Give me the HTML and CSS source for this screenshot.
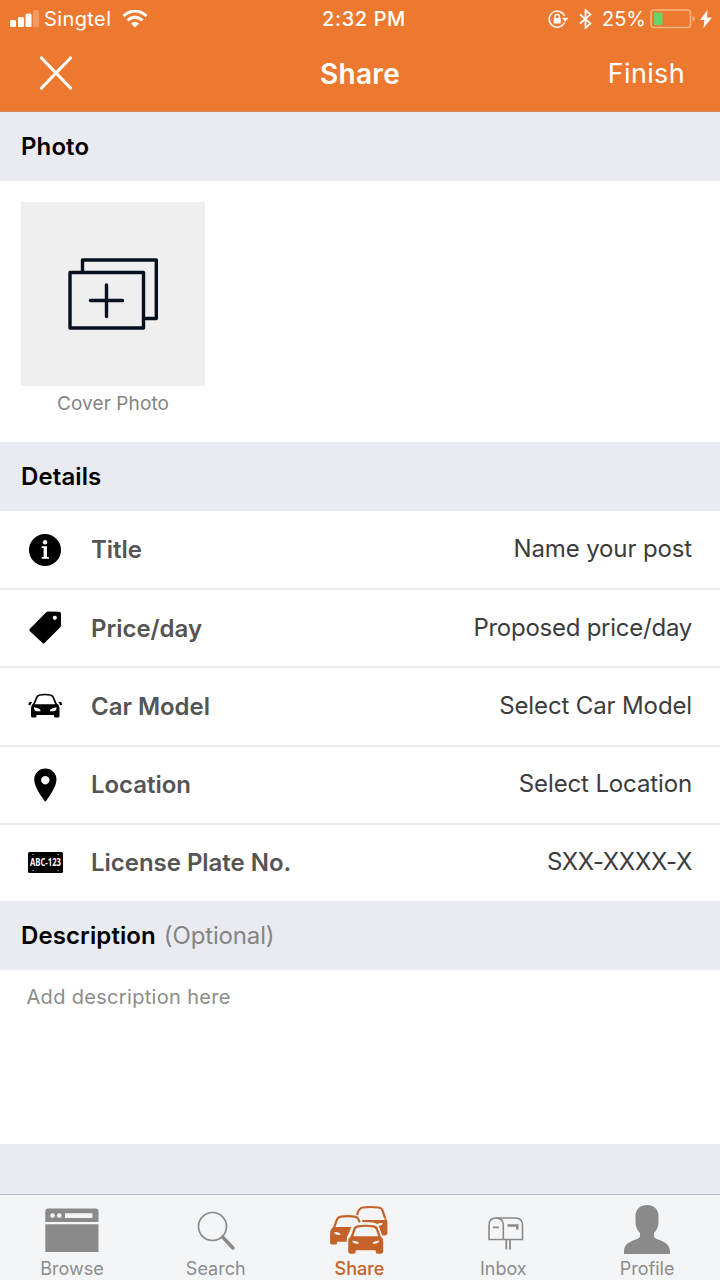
FILE: index.html
```
<!DOCTYPE html>
<html lang="en">
<head>
<meta charset="utf-8">
<title>Share</title>
<link rel="stylesheet" href="styles.css">
</head>
<body>
<div class="app">
  <header class="top">
    <div class="status">
      <div class="status-left">
        <svg class="signal" width="29" height="18" viewBox="0 0 29 18" fill="#fff"><rect x="0" y="10" width="6" height="7" rx="1.5"/><rect x="8" y="7" width="6" height="10" rx="1.5"/><rect x="15.500" y="3.500" width="6" height="13.500" rx="1.500"/><rect x="23" y="0" width="6" height="17" rx="1.5" opacity=".25"/></svg>
        <span class="carrier">Singtel</span>
        <svg class="wifi" width="26" height="18" viewBox="0 0 26 18" fill="none" stroke="#fff" stroke-width="3"><path d="M1.500 6Q13-4 24.500 6"/><path d="M5.500 10.300Q13 4 20.500 10.300"/><path d="M9 13.500Q13 9.800 17 13.500L13 17.500Z" fill="#fff" stroke="none"/></svg>
      </div>
      <span class="time">2:32 PM</span>
      <div class="status-right">
        <svg class="lock" width="21" height="18" viewBox="0 0 21 18" fill="none" stroke="#fff" stroke-width="1.500"><path d="M16.500 12.500A8 8 0 1 1 16.600 6"/><path d="M14 7.700h6.500L17.300 12Z" fill="#fff" stroke="none"/><rect x="5.700" y="8" width="7" height="5.400" rx=".6" fill="#fff" stroke="none"/><path d="M7 8.500V6.600a2.200 2.200 0 0 1 4.400 0v1.900"/></svg>
        <svg class="bluetooth" width="13" height="20" viewBox="0 0 13 20" fill="none" stroke="#fff" stroke-width="1.700"><path d="M1 5.500l10.500 9L6.500 19V1l5 4.500L1 14.500"/></svg>
        <span class="percent">25%</span>
        <svg class="battery" width="45" height="20" viewBox="0 0 45 20"><rect x="1" y="1" width="39.500" height="17.500" rx="3" fill="none" stroke="#f7b680" stroke-width="1.600"/><rect x="4" y="3.500" width="8.500" height="12.500" fill="#69d36b"/><path d="M42.500 7q2.500.5 2.500 2.800t-2.500 2.800Z" fill="#f7b680"/></svg>
        <svg class="bolt" width="12" height="18" viewBox="0 0 12 18"><path d="M7.500 0L0 10h4.500L3.500 18 12 7.500H7Z" fill="#fff"/></svg>
      </div>
    </div>
    <nav class="nav">
      <svg class="close" width="34" height="34" viewBox="0 0 34 34"><path d="M2.500 2l29 30M31.500 2L2.500 32" stroke="#fff" stroke-width="3.200" stroke-linecap="round"/></svg>
      <h1 class="title">Share</h1>
      <span class="finish">Finish</span>
    </nav>
  </header>

  <h2 class="section">Photo</h2>
  <section class="photo">
    <figure class="cover">
      <div class="cover-box">
        <svg width="90" height="72" viewBox="0 0 90 72" fill="none" stroke="#06101f" stroke-width="3.400" stroke-linejoin="round"><path d="M14.500 14V2H88.300V60.500H76"/><rect x="2" y="14.500" width="73.500" height="55.500"/><path d="M38.500 27V58.500M22.500 42.500H54.500" stroke-linecap="round"/></svg>
      </div>
      <figcaption class="caption">Cover Photo</figcaption>
    </figure>
  </section>

  <h2 class="section">Details</h2>
  <section class="rows">
    <div class="row">
      <svg class="row-icon" width="36" height="36" viewBox="0 0 36 36"><circle cx="17" cy="18" r="16"/><circle cx="17.100" cy="10.300" r="2.200" fill="#fff"/><path d="M13.700 14.200h5.300V25h1.900v1.700h-7.200V25h1.900v-9.100h-1.900Z" fill="#fff"/></svg>
      <span class="label">Title</span><span class="value">Name your post</span>
    </div>
    <div class="row">
      <svg class="row-icon" width="36" height="36" viewBox="0 0 36 36"><path fill-rule="evenodd" d="M18 2.500Q19 1.500 20.500 1.500L31 1.700Q33 1.700 33 3.700V15Q33 16.500 32 17.500L16.500 33Q15.500 34 14.500 33L1.700 21Q.8 20 1.700 19ZM26.800 5.700a2.100 2.100 0 1 0 .01 0Z"/></svg>
      <span class="label">Price/day</span><span class="value value-tight">Proposed price/day</span>
    </div>
    <div class="row">
      <svg class="row-icon" width="36" height="36" viewBox="0 0 36 36"><path fill-rule="evenodd" d="M3 20Q3 17 5.500 15L8 9Q9 6.800 11 6.400Q17 5.300 23 6.400Q25 6.800 26 9L28.500 15Q31.500 17 31.500 20V28Q31.500 29.500 30 29.500H27.500Q26 29.500 26 28V27H8.500V28Q8.500 29.500 7 29.500H4.500Q3 29.500 3 28ZM6.800 16.200H27.200L24.500 9.700Q23.800 8 22 7.700Q17 6.800 12 7.700Q10.200 8 9.500 9.700ZM6 20Q6 23 9 23.200H12.500Q13.500 20.500 6 19.200ZM28.500 20Q28.500 23 25.500 23.200H22Q21 20.500 28.500 19.200Z"/><path d="M.5 17Q.3 13.800 3 13.800Q4.500 13.900 3.800 15L3 15.500 2.500 17.200ZM34 17Q34.200 13.800 31.500 13.800Q30 13.900 30.700 15L31.500 15.500 32 17.200Z"/></svg>
      <span class="label">Car Model</span><span class="value">Select Car Model</span>
    </div>
    <div class="row">
      <svg class="row-icon" width="36" height="36" viewBox="0 0 36 36"><path fill-rule="evenodd" d="M17.300 1.500A11 11 0 0 1 28.500 12.500C28.500 20 21.500 28.500 18.500 33.500Q17.300 35.500 16.200 33.500C13 28.500 6.200 20 6.200 12.500A11 11 0 0 1 17.300 1.500ZM17.300 9a4.200 4.200 0 1 0 .01 0Z"/></svg>
      <span class="label">Location</span><span class="value">Select Location</span>
    </div>
    <div class="row">
      <svg class="row-icon" width="36" height="36" viewBox="0 0 36 36"><rect x="0" y="7" width="35" height="21" rx="1.500"/><text class="plate" x="17.500" y="21.200" textLength="31" lengthAdjust="spacingAndGlyphs">ABC-123</text><path d="M4.500 9.500h1.200M29.500 9.500h1.200M4.500 25.500h1.200M29.500 25.500h1.200" stroke="#ccc" stroke-width="1.200"/></svg>
      <span class="label">License Plate No.</span><span class="value value-plate">SXX-XXXX-X</span>
    </div>
  </section>

  <h2 class="section"><span>Description</span> <span class="optional">(Optional)</span></h2>
  <div class="desc">Add description here</div>

  <footer class="tabs">
    <div class="tab">
      <svg class="tab-icon" width="60" height="52" viewBox="0 0 60 52" fill="#8a8a8a"><path fill-rule="evenodd" d="M3.300 17V6.500Q3.300 3.500 6.300 3.500H53.500Q56.500 3.500 56.500 6.500V17ZM10.500 8.300a2.300 2.300 0 1 0 .01 0ZM17.300 8.300a2.300 2.300 0 1 0 .01 0ZM23 8.300V13H50.500V8.300Z"/><path d="M3.300 19.200H56.500V47H3.300Z"/></svg>
      <span class="tab-label">Browse</span>
    </div>
    <div class="tab">
      <svg class="tab-icon" width="60" height="52" viewBox="0 0 60 52" fill="none" stroke="#8a8a8a"><circle cx="26.500" cy="21.500" r="14" stroke-width="1.700"/><path d="M36.500 32L47 43" stroke-width="3.400" stroke-linecap="round"/></svg>
      <span class="tab-label">Search</span>
    </div>
    <div class="tab active">
      <svg class="tab-icon" width="60" height="52" viewBox="0 0 60 52">
        <g fill="#c5622a" transform="translate(.7 0) scale(1 .965)">
          <path d="M27.500 10.500Q28.500 3.500 33 2.600Q41 1.500 49 2.600Q52 3 53 6L55.500 14" fill="none" stroke="#c5622a" stroke-width="2.200"/>
          <path d="M32.500 15.500H54L56.500 14Q57.700 16 57.700 19V29Q57.700 31.500 55.500 31.500H52.500L49 21.500Q52.500 21 53 18.800Q49.500 18.500 47.500 19.800Q45 18 41 17.800L32.500 17.500Z"/>
          <path d="M4.500 23L7.500 14.500Q8.500 12.300 11 12Q18 11 25 12Q28 12.500 29 15.500L30 18" fill="none" stroke="#c5622a" stroke-width="2.200"/>
          <path fill-rule="evenodd" d="M3.500 22.700H21.500Q19.500 29 18.500 30.500Q17 32.500 17 38H7.500V39Q7.500 41 5.500 41H2.500Q.4 41 .4 39V29Q.4 25 3.500 22.700ZM4.500 28Q5 31.500 10.500 31Q11.500 28.300 4.500 28Z"/>
          <path fill-rule="evenodd" d="M18.500 38Q18.500 34.500 21 32.500L23.500 25Q24.500 21.500 28 21Q36 19.800 44 21Q47.500 21.500 48.500 25L51 32.500Q53.500 34.500 53.500 38V48Q53.500 50.500 51.500 50.500H48Q46 50.500 46 48.500V47H26V48.500Q26 50.500 24 50.500H20.500Q18.500 50.500 18.500 48ZM23.500 32.300H48.500L46.200 25.500Q45.500 23.600 43.500 23.200Q36 22 28.500 23.200Q26.500 23.600 25.800 25.500ZM22.500 37Q23 40.500 29 40Q29.500 37.500 22.500 37ZM49.500 37Q42.500 37.500 43 40Q49 40.500 49.500 37Z"/>
        </g>
      </svg>
      <span class="tab-label">Share</span>
    </div>
    <div class="tab">
      <svg class="tab-icon" width="60" height="52" viewBox="0 0 60 52" fill="none" stroke="#8a8a8a" stroke-width="1.600"><path d="M16 34.500V20.500Q16 13 23 13H42.500Q49.500 13 49.500 20.500V34.500Z"/><path d="M23 13Q30.300 13 30.300 20.500V34.500"/><path d="M20 22.300H26M33.300 35V44.500M37 35V44.500" stroke-width="1.800"/><path d="M34.500 20.500H44.300V24.500" stroke-width="2.500"/></svg>
      <span class="tab-label">Inbox</span>
    </div>
    <div class="tab">
      <svg class="tab-icon" width="60" height="52" viewBox="0 0 60 52" fill="#8a8a8a"><path d="M30 0C37.500 0 41.500 5 41.500 11V17C41.500 22 39.500 25.500 37 28V31.500C38 35.500 53 35 53 46.500V49H7V46.500C7 35 22 35.500 23 31.500V28C20.500 25.500 18.500 22 18.500 17V11C18.500 5 22.500 0 30 0Z"/></svg>
      <span class="tab-label">Profile</span>
    </div>
  </footer>
</div>
</body>
</html>
```
FILE: styles.css
```
* { box-sizing: border-box; }
body { margin: 0; font-family: Inter, "Liberation Sans", sans-serif; color: #000; }
svg { display: block; flex: none; }
.app { width: 720px; height: 1280px; display: flex; flex-direction: column; background: #e9ebf0; overflow: hidden; white-space: nowrap; }
.top { height: 112px; flex: none; background: #ed7930; color: #fff; border-bottom: 1px solid #d98450; }
.status { height: 36px; display: grid; grid-template-columns: 1fr auto 1fr; align-items: center; font-size: 20px; padding: 1px 8px 0 16px; }
.status-left, .status-right { display: flex; align-items: center; }
.status-left { margin-left: -6px; }
.status-right { justify-content: flex-end; }
.carrier { margin-left: 5px; width: 67px; letter-spacing: .4px; }
.wifi { margin-left: 11px; }
.time { font-weight: 500; letter-spacing: .6px; }
.bluetooth { margin-left: 10px; }
.percent { margin-left: 10px; width: 43px; }
.battery { margin-left: 5px; }
.bolt { margin-left: 5px; }
.nav { height: 75px; display: grid; grid-template-columns: 1fr auto 1fr; align-items: center; padding: 0 35px; }
.close { margin-left: 4px; margin-top: -1px; }
.title { margin: 0; font-size: 28px; font-weight: 600; letter-spacing: .3px; }
.finish { justify-self: end; font-size: 27px; letter-spacing: .35px; }
.section { margin: 0; flex: none; height: 69px; padding: 0 21px; display: flex; align-items: center; font-size: 24px; font-weight: 600; letter-spacing: .1px; }
.photo { height: 261px; flex: none; background: #fff; padding: 21px; }
.cover { margin: 0; width: 184px; }
.cover-box { height: 184px; background: #efefef; display: flex; align-items: center; justify-content: center; }
.caption { text-align: center; font-size: 19px; line-height: 22px; padding-top: 7px; color: #858585; letter-spacing: .1px; }
.rows { flex: none; background: #fff; height: 390px; display: grid; grid-template-rows: 79px repeat(3, 78.25px) 76.25px; }
.row { display: flex; align-items: center; padding: 0 28px; border-bottom: 2px solid #ebebed; }
.row:last-child { border-bottom: 0; }
.label { margin-left: 27px; font-size: 24px; font-weight: 600; color: #555; letter-spacing: -.03px; }
.value { margin-left: auto; font-size: 24px; color: #3c3c3c; letter-spacing: -.13px; margin-top: -2px; }
.value-tight { letter-spacing: -.25px; }
.value-plate { letter-spacing: -.35px; }
.plate { font: 700 10px "Open Sans", sans-serif; fill: #fff; text-anchor: middle; }
.optional { font-weight: 400; color: #858585; margin-left: 8px; letter-spacing: -.15px; }
.desc { height: 174px; flex: none; background: #fff; padding: 14px 26.5px; font-size: 20px; line-height: 26px; color: #8c8c8c; letter-spacing: .32px; }
.tabs { margin-top: auto; flex: none; height: 86px; background: #f4f5f7; border-top: 1px solid #b9babf; display: grid; grid-template-columns: repeat(5, 1fr); padding-right: 1px; }
.tab { display: flex; flex-direction: column; align-items: center; padding-top: 10px; color: #8c8c8c; }
.tab-label { font-size: 18px; line-height: 22px; margin-top: 1px; }
.active { color: #c5622a; font-weight: 500; }
```
